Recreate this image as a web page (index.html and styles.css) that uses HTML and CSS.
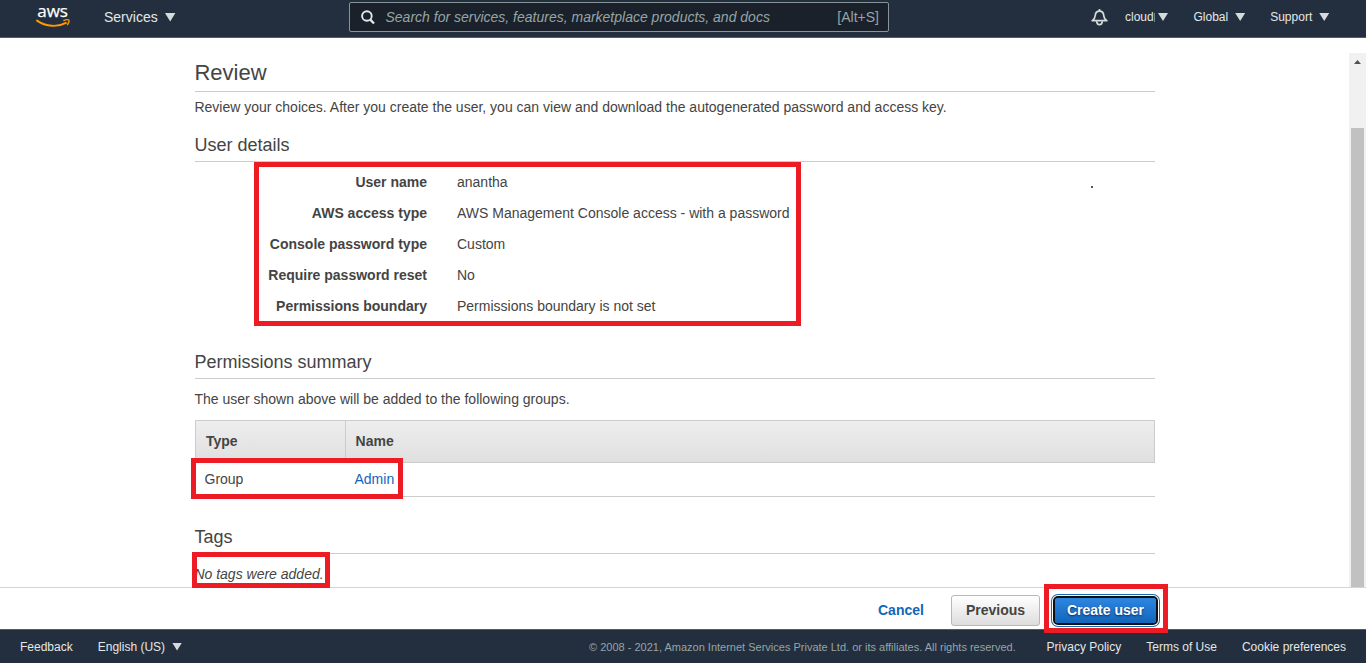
FILE: index.html
```html
<!DOCTYPE html>
<html lang="en">
<head>
<meta charset="utf-8">
<title>Review - Add user</title>
<link rel="stylesheet" href="styles.css">
</head>
<body>
<div class="app">
  <header class="topbar">
    <svg class="logo" width="36" height="24" viewBox="0 0 36 24">
      <text class="logo-text" x="1.2" y="12" textLength="30.8" lengthAdjust="spacingAndGlyphs">aws</text>
      <path d="M1 15.6C10 21.9 22 22.3 30 17.9" fill="none" stroke="#f90" stroke-width="1.9" stroke-linecap="round"/>
      <path d="M27.3 15.7C30 14.6 32.4 14.5 32.9 15.1C33.4 15.9 32.7 18.4 31.2 20" fill="none" stroke="#f90" stroke-width="1.4"/>
    </svg>
    <div class="services"><span>Services</span><i class="caret caret-lg"></i></div>
    <div class="search">
      <svg class="search-icon" width="14" height="15" viewBox="0 0 14 15"><circle cx="5.9" cy="6" r="4.8" fill="none" stroke="#e3e7e7" stroke-width="1.9"/><path d="M9.3 9.6L13 13.5" stroke="#e3e7e7" stroke-width="2.3"/></svg>
      <span class="placeholder">Search for services, features, marketplace products, and docs</span>
      <span class="shortcut">[Alt+S]</span>
    </div>
    <nav class="account">
      <svg class="bell" width="17" height="17" viewBox="0 0 17 17" fill="none" stroke="#d5dbdb" stroke-width="1.7"><path d="M1.2 11.7H15.8C14 10.6 13 9 12.8 6.8C12.6 4 11.2 2.2 8.5 2.2C5.8 2.2 4.4 4 4.2 6.8C4 9 3 10.6 1.2 11.7Z" stroke-linejoin="round"/><path d="M8.5 0V2.2M5.7 12.3C5.8 14.5 6.8 15.7 8.5 15.7S11.2 14.5 11.3 12.3"/></svg>
      <span class="user">cloud</span><i class="caret"></i>
      <span class="region">Global</span><i class="caret"></i>
      <span class="support">Support</span><i class="caret"></i>
    </nav>
  </header>
  <main class="page">
    <div class="content">
      <h1 class="title">Review</h1>
      <p class="intro">Review your choices. After you create the user, you can view and download the autogenerated password and access key.</p>
      <h2 class="section">User details</h2>
      <dl class="details">
        <dt>User name</dt><dd>anantha</dd>
        <dt>AWS access type</dt><dd>AWS Management Console access - with a password</dd>
        <dt>Console password type</dt><dd>Custom</dd>
        <dt>Require password reset</dt><dd>No</dd>
        <dt>Permissions boundary</dt><dd>Permissions boundary is not set</dd>
      </dl>
      <h2 class="section">Permissions summary</h2>
      <p class="summary">The user shown above will be added to the following groups.</p>
      <div class="groups">
        <div class="group-head"><span>Type</span><span>Name</span></div>
        <div class="group-row"><span>Group</span><a>Admin</a></div>
      </div>
      <h2 class="section">Tags</h2>
      <p class="no-tags">No tags were added.</p>
    </div>
    <div class="scrollbar"><svg class="arrow" width="7" height="4" viewBox="0 0 7 4"><path d="M0 4L3.5 0L7 4Z" fill="#505050"/></svg><div class="thumb"></div></div>
  </main>
  <div class="actions">
    <a class="cancel">Cancel</a>
    <button class="btn">Previous</button>
    <button class="btn primary">Create user</button>
  </div>
  <footer class="footer">
    <span class="feedback">Feedback</span>
    <span class="language">English (US)</span><i class="caret"></i>
    <span class="copyright">© 2008 - 2021, Amazon Internet Services Private Ltd. or its affiliates. All rights reserved.</span>
    <span class="privacy">Privacy Policy</span>
    <span class="terms">Terms of Use</span>
    <span class="cookies">Cookie preferences</span>
  </footer>
  <div class="mark mark-details"></div>
  <div class="mark mark-group"></div>
  <div class="mark mark-tags"></div>
  <div class="mark mark-create"></div>
  <div class="speck"></div>
</div>
</body>
</html>
```
FILE: styles.css
```css
* { box-sizing: border-box; }
body, h1, h2, p, dl, dd { margin: 0; }
body { font: 14px "Liberation Sans", Arial, sans-serif; color: #444; background: #fff; }
.app { position: relative; width: 1366px; height: 663px; overflow: hidden; display: flex; flex-direction: column; white-space: nowrap; }

.topbar { display: flex; height: 38px; flex: none; background: #232f3e; border-bottom: 1px solid #545b64; color: #e3e7e7; line-height: 34px; }
.logo { margin: 5px 0 0 36px; overflow: visible; flex: none; }
.logo-text { font: 500 17px "Open Sans", "Noto Sans", sans-serif; fill: #fff; stroke: #fff; stroke-width: .25px; }
.services { display: flex; align-items: center; height: 34px; width: 245px; margin-left: 32px; gap: 7px; }
.caret { flex: none; width: 10px; height: 8px; background: #d5dbdb; clip-path: polygon(0 0, 100% 0, 50% 100%); }
.caret-lg { width: 11px; height: 9px; }
.search { display: flex; align-items: center; width: 540px; height: 30px; margin-top: 2px; padding: 0 9px 0 11px; border: 1px solid #879596; border-radius: 2px; background: #1a212a; color: #95a5a6; line-height: 28px; }
.search-icon { margin-right: 10.5px; }
.placeholder { font-style: italic; }
.shortcut { margin-left: auto; }
.account { display: flex; align-items: center; height: 34px; margin-left: 202px; font-size: 12px; }
.bell { margin-right: 17px; flex: none; }
.user { display: flex; align-items: center; width: 30px; margin-right: 3px; }
.user::after { content: ""; width: 1px; height: 9px; background: #5b8da8; }
.region { margin: 0 7px 0 25.5px; }
.support { margin: 0 7px 0 25px; }

.page { display: flex; height: 549px; flex: none; overflow: hidden; }
.content { width: 960px; margin-left: 195px; padding-top: 16px; }
.title { height: 38px; line-height: 37px; font-size: 22px; font-weight: 400; border-bottom: 1px solid #ccc; text-indent: -.6px; }
.intro { height: 37px; line-height: 31px; text-indent: -.6px; }
.section { height: 33px; line-height: 32px; font-size: 18px; font-weight: 400; border-bottom: 1px solid #ccc; text-indent: -.6px; }
.details { display: grid; grid-template-columns: 232px 1fr; grid-auto-rows: 31px; column-gap: 30px; padding-top: 5px; height: 184px; line-height: 31px; }
.details dt { font-weight: 700; text-align: right; }
.summary { height: 41px; line-height: 41px; text-indent: -.6px; }
.groups { height: 101px; }
.group-head { display: grid; grid-template-columns: 150px 1fr; height: 43px; line-height: 41px; border: 1px solid #ccc; background: linear-gradient(#eee, #dfdfdf); font-weight: 700; }
.group-head span { padding-left: 9.6px; }
.group-head span:first-child { border-right: 1px solid #ccc; padding-left: 10px; }
.group-row { display: grid; grid-template-columns: 150px 1fr; height: 34px; line-height: 33px; padding-left: 9.5px; border-bottom: 1px solid #ccc; }
.group-row a { color: #1166bb; }
.no-tags { line-height: 40px; font-style: italic; text-indent: -.6px; }
.scrollbar { width: 17px; height: 534px; margin: 15px 0 0 194px; background: #f1f1f1; padding: 7px 2px 0; }
.arrow { display: block; margin: 0 auto; }
.thumb { height: 459px; margin-top: 64px; background: #c1c1c1; }

.actions { display: flex; align-items: center; height: 42px; flex: none; padding: 4px 0 0 878px; border-top: 1px solid #d5d5d5; background: #fff; }
.cancel { width: 73px; padding-bottom: 2px; font-weight: 700; color: #1166bb; }
.btn { width: 89px; height: 31px; padding: 0 0 2px; border: 1px solid #b8b8b8; border-radius: 3px; background: linear-gradient(#fff, #ddd); color: #444; font: 700 14px "Liberation Sans", Arial, sans-serif; }
.primary { width: 101px; height: 25px; margin-left: 15px; border: 0; outline: 2px solid #101010; box-shadow: 0 0 0 3px #fff, 0 0 0 4px #146eb4; background: linear-gradient(#2f86e0, #1166bb); color: #fff; text-shadow: 0 1px 2px #052d58; }

.footer { display: flex; align-items: center; height: 34px; flex: none; padding-left: 20px; border-top: 1px solid #545b64; background: #232f3e; color: #e3e7e7; font-size: 12px; }
.language { margin: 0 7px 0 25px; }
.copyright { width: 427px; margin-left: 407px; font-size: 11px; color: #95a5a6; }
.privacy { margin-left: 30.5px; }
.terms { margin-left: 25px; }
.cookies { margin-left: 25px; }

.mark { position: absolute; border: 5px solid #ed1c24; }
.mark-details { left: 254px; top: 162px; width: 547px; height: 164px; }
.mark-group { left: 191px; top: 458px; width: 212px; height: 41px; }
.mark-tags { left: 192px; top: 552px; width: 138px; height: 36px; }
.mark-create { left: 1044px; top: 584px; width: 124px; height: 49px; }
.speck { position: absolute; left: 1091px; top: 186px; width: 2px; height: 2px; background: #555; }
```
